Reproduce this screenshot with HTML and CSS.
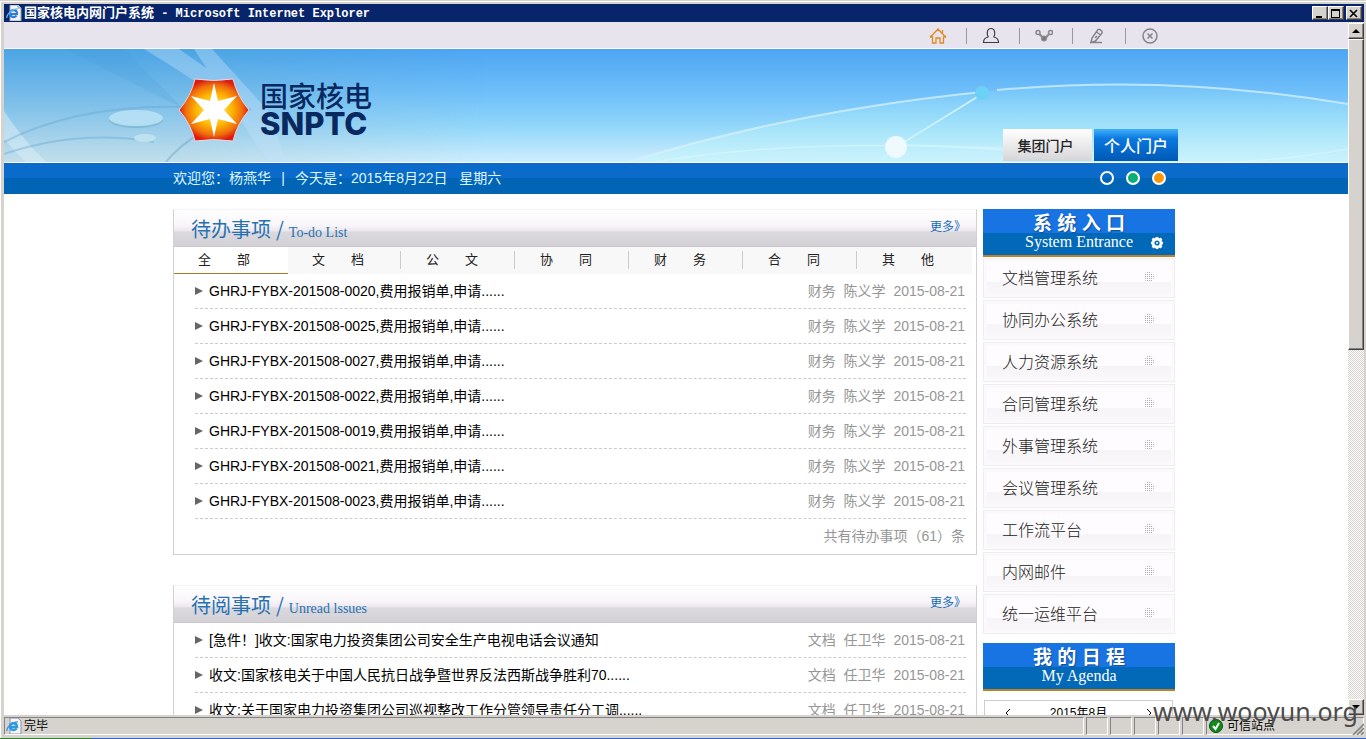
FILE: index.html
```html
<!DOCTYPE html>
<html lang="zh-CN">
<head>
<meta charset="utf-8">
<title>国家核电内网门户系统</title>
<link rel="stylesheet" href="styles.css">
</head>
<body>
<div class="window">
  <div class="titlebar">
    <svg class="page-icon" viewBox="0 0 16 16"><path d="M4 0h8l3 3v13H4z" fill="#f4f4f0" stroke="#9aa6b8"/><path d="M12 0v3h3" fill="#cfd6e2" stroke="#9aa6b8"/><path d="M3 9h8c0-5-7-5-7-.500 0 4 5 4.500 6.500 2" fill="none" stroke="#2c7fd4" stroke-width="2.200"/><path d="M1 13C0 10 7 3 12 4" fill="none" stroke="#6bb2ee" stroke-width="1.200"/></svg>
    <span class="window-title">国家核电内网门户系统<span class="window-app"> - Microsoft Internet Explorer</span></span>
    <div class="window-buttons">
      <button class="bevel win-btn" aria-label="最小化"><svg viewBox="0 0 13 11"><path d="M3 8h6v2H3z"/></svg></button>
      <button class="bevel win-btn" aria-label="最大化"><svg viewBox="0 0 13 11"><path d="M2 1h9v9H2zM3 3v6h7V3z" fill-rule="evenodd"/></svg></button>
      <button class="bevel win-btn win-close" aria-label="关闭"><svg viewBox="0 0 13 11"><path d="M3 2l7 7M10 2l-7 7" stroke="#000" stroke-width="1.600"/></svg></button>
    </div>
  </div>

  <div class="viewport">
    <div class="page">
      <div class="toolbar">
        <nav class="wrap tools">
          <button class="tool" aria-label="首页"><svg viewBox="0 0 18 18" fill="none" stroke="#e08a22" stroke-width="1.300"><path d="M2 9.500 9 2l7 7.500M1.500 8.500v1.500h2v6h3.500v-5h4v5h3.500v-6h2V8.500M13.500 3v3"/></svg></button>
          <button class="tool" aria-label="用户"><svg viewBox="0 0 18 18" fill="none" stroke="#3c3c40" stroke-width="1.200"><path d="M6.500 10C4.500 8 4.500 1.500 9 1.500S13.500 8 11.500 10M6.500 10C3 10.500 1.500 12 1.500 15.500h15c0-3.500-1.500-5-5-5.500"/></svg></button>
          <button class="tool" aria-label="分享"><svg viewBox="0 0 18 18" fill="none" stroke="#8a8a8e" stroke-width="1.500"><circle cx="3" cy="5.500" r="2"/><circle cx="15.500" cy="5.500" r="2"/><path d="m4.500 7 3 3.500M14 7l-3 3.500" stroke-width="2"/><circle cx="9" cy="11.500" r="2.300" fill="#77777b"/></svg></button>
          <button class="tool" aria-label="编辑"><svg viewBox="0 0 18 18" fill="none" stroke="#858589" stroke-width="1.500"><path d="M3 15.500 4 11l6-8.500h2l2 2v1.500L7.500 14zM8.500 5l4 3M9 9l-2 2M2 15.500h12"/></svg></button>
          <button class="tool" aria-label="退出"><svg viewBox="0 0 18 18" fill="none" stroke="#858589" stroke-width="1.500"><circle cx="9" cy="9" r="7"/><path d="m6.500 6.500 5 5M11.500 6.500l-5 5"/></svg></button>
        </nav>
      </div>

      <header class="banner">
        <svg class="banner-art" viewBox="0 0 1344 113" preserveAspectRatio="xMidYMid slice" aria-hidden="true">
          <defs>
            <linearGradient id="sky" x1="0" y1="0" x2="0" y2="1"><stop offset="0" stop-color="#4da5f3"/><stop offset=".4" stop-color="#70c0fa"/><stop offset=".7" stop-color="#94d8fa"/><stop offset="1" stop-color="#cfeefe"/></linearGradient>
            <linearGradient id="left" x1="0" y1="0" x2="0" y2="1"><stop offset="0" stop-color="#4ba4e4"/><stop offset=".5" stop-color="#80c1ea"/><stop offset="1" stop-color="#c2dfeb"/></linearGradient>
            <linearGradient id="fade" x1="0" y1="0" x2="1" y2="0"><stop offset=".4" stop-color="#fff"/><stop offset="1" stop-color="#000"/></linearGradient>
            <mask id="left-mask"><rect width="480" height="113" fill="url(#fade)"/></mask>
            <linearGradient id="glow" x1="0" y1="0" x2="0" y2="1"><stop offset="0" stop-color="#a6ecf8" stop-opacity=".15"/><stop offset="1" stop-color="#c8f5fb" stop-opacity=".65"/></linearGradient>
          </defs>
          <rect width="1344" height="113" fill="url(#sky)"/>
          <rect width="480" height="113" fill="url(#left)" mask="url(#left-mask)"/>
          <path d="M140 0h35l85 60h-30Q190 30 140 0zM190 0h18l58 64 16 49h-18z" fill="#c4e2fb" opacity=".4"/>
          <path d="M60 0h60l60 60z" fill="#3e97d4" opacity=".16"/>
          <path d="M0 62q20 30 42 51H22Q8 100 0 90z" fill="#dceff5" opacity=".5"/>
          <path d="M0 93Q75 55 180 58M0 105q75-25 150-12" fill="none" stroke="#65a4cc" stroke-width="2" opacity=".4"/>
          <path d="M162 113q25-31 85-53" fill="none" stroke="#70a8c7" stroke-width="2" opacity=".5"/>
          <ellipse cx="132" cy="71" rx="27" ry="8" fill="#82bcd9"/><ellipse cx="132" cy="69" rx="27" ry="8" fill="#b4def4"/>
          <ellipse cx="141" cy="89" rx="11" ry="4" fill="#bfe2f1"/>
          <path d="M624 113Q790 62 978 43T1344 55v58z" fill="url(#glow)"/>
          <path d="M624 113Q790 62 978 43M993 41q175-16 351 14" fill="none" stroke="#d6f1fe" stroke-width="2" opacity=".75"/>
          <path d="M650 113q150-25 350-12M900 96q170 4 250 14t194-10" fill="none" stroke="#e2fafe" stroke-width="1.500" opacity=".5"/>
          <path d="M978 45 892 98l-14 12" fill="none" stroke="#d2f3fe" stroke-width="1.500"/>
          <circle cx="978" cy="44" r="7" fill="#6cd1f6"/><circle cx="892" cy="98" r="11" fill="#eefaff"/>
        </svg>
        <div class="wrap banner-row">
          <div class="logo">
            <svg class="logo-mark" viewBox="0 0 72 64" aria-hidden="true">
              <defs><radialGradient id="fire"><stop offset="0" stop-color="#fff8a0"/><stop offset=".5" stop-color="#ffb800"/><stop offset=".8" stop-color="#f0700e"/><stop offset="1" stop-color="#dc1c10"/></radialGradient></defs>
              <path d="M17 1q19 3 38 0 4 17 16 31-12 14-16 31-19-3-38 0Q13 46 1 32 13 18 17 1z" fill="url(#fire)" stroke="#e9d5df"/>
              <path d="m36 5 4 18 19-5-13 14 13 14-19-5-4 18-4-18-19 5 13-14-13-14 19 5z" fill="#fff"/><circle cx="36" cy="32" r="10" fill="#fff"/>
            </svg>
            <div class="logo-text"><span class="logo-cn">国家核电</span><span class="logo-en">SNPTC</span></div>
          </div>
          <nav class="portals"><a class="portal" href="#">集团门户</a><a class="portal portal-on" href="#">个人门户</a></nav>
        </div>
      </header>

      <div class="greeting">
        <div class="wrap greeting-row">
          <p class="hello"><span>欢迎您：杨燕华</span><span class="bar">|</span><span>今天是：2015年8月22日&nbsp;&nbsp; 星期六</span></p>
          <div class="skins"><button class="skin" aria-label="蓝色"></button><button class="skin skin-green" aria-label="绿色"></button><button class="skin skin-orange" aria-label="橙色"></button></div>
        </div>
      </div>

      <div class="wrap columns">
        <main class="main">
          <section class="panel">
            <div class="panel-head"><h2 class="panel-title">待办事项 <span class="slash">/</span><span class="panel-en">To-do List</span></h2><a class="more" href="#">更多》</a></div>
            <nav class="tabs">
              <button class="tab tab-on">全&emsp;&emsp;部</button><button class="tab">文&emsp;&emsp;档</button><button class="tab">公&emsp;&emsp;文</button><button class="tab">协&emsp;&emsp;同</button><button class="tab">财&emsp;&emsp;务</button><button class="tab">合&emsp;&emsp;同</button><button class="tab">其&emsp;&emsp;他</button>
            </nav>
            <ul class="rows">
              <li class="row"><a class="row-link" href="#">GHRJ-FYBX-201508-0020,费用报销单,申请......</a><span class="meta">财务&nbsp; 陈义学&nbsp; 2015-08-21</span></li>
              <li class="row"><a class="row-link" href="#">GHRJ-FYBX-201508-0025,费用报销单,申请......</a><span class="meta">财务&nbsp; 陈义学&nbsp; 2015-08-21</span></li>
              <li class="row"><a class="row-link" href="#">GHRJ-FYBX-201508-0027,费用报销单,申请......</a><span class="meta">财务&nbsp; 陈义学&nbsp; 2015-08-21</span></li>
              <li class="row"><a class="row-link" href="#">GHRJ-FYBX-201508-0022,费用报销单,申请......</a><span class="meta">财务&nbsp; 陈义学&nbsp; 2015-08-21</span></li>
              <li class="row"><a class="row-link" href="#">GHRJ-FYBX-201508-0019,费用报销单,申请......</a><span class="meta">财务&nbsp; 陈义学&nbsp; 2015-08-21</span></li>
              <li class="row"><a class="row-link" href="#">GHRJ-FYBX-201508-0021,费用报销单,申请......</a><span class="meta">财务&nbsp; 陈义学&nbsp; 2015-08-21</span></li>
              <li class="row"><a class="row-link" href="#">GHRJ-FYBX-201508-0023,费用报销单,申请......</a><span class="meta">财务&nbsp; 陈义学&nbsp; 2015-08-21</span></li>
            </ul>
            <p class="total">共有待办事项（61）条</p>
          </section>

          <section class="panel">
            <div class="panel-head"><h2 class="panel-title">待阅事项 <span class="slash">/</span><span class="panel-en">Unread lssues</span></h2><a class="more" href="#">更多》</a></div>
            <ul class="rows">
              <li class="row"><a class="row-link" href="#">[急件！]收文:国家电力投资集团公司安全生产电视电话会议通知</a><span class="meta">文档&nbsp; 任卫华&nbsp; 2015-08-21</span></li>
              <li class="row"><a class="row-link" href="#">收文:国家核电关于中国人民抗日战争暨世界反法西斯战争胜利70......</a><span class="meta">文档&nbsp; 任卫华&nbsp; 2015-08-21</span></li>
              <li class="row"><a class="row-link" href="#">收文:关于国家电力投资集团公司巡视整改工作分管领导责任分工调......</a><span class="meta">文档&nbsp; 任卫华&nbsp; 2015-08-21</span></li>
            </ul>
          </section>
        </main>

        <aside class="side">
          <div class="side-head"><h2 class="side-title">系 统 入 口</h2><span class="side-en">System Entrance</span>
            <button class="gear" aria-label="设置"><svg viewBox="0 0 14 14"><circle cx="7" cy="7" r="4" fill="none" stroke="#fff" stroke-width="2.800"/><path d="M7 1v2M7 11v2M1 7h2M11 7h2M2.500 2.500 4 4M10 10l1.500 1.500M11.500 2.500 10 4M4 10l-1.500 1.500" stroke="#fff" stroke-width="2.600"/><circle cx="7" cy="7" r="1" fill="#fff"/></svg></button>
          </div>
          <ul class="entries">
            <li><a class="entry" href="#">文档管理系统</a></li>
            <li><a class="entry" href="#">协同办公系统</a></li>
            <li><a class="entry" href="#">人力资源系统</a></li>
            <li><a class="entry" href="#">合同管理系统</a></li>
            <li><a class="entry" href="#">外事管理系统</a></li>
            <li><a class="entry" href="#">会议管理系统</a></li>
            <li><a class="entry" href="#">工作流平台</a></li>
            <li><a class="entry" href="#">内网邮件</a></li>
            <li><a class="entry" href="#">统一运维平台</a></li>
          </ul>
          <div class="side-head"><h2 class="side-title">我 的 日 程</h2><span class="side-en">My Agenda</span></div>
          <div class="calendar">
            <button class="month-btn" aria-label="上个月"><svg viewBox="0 0 6 10"><path d="M5 1 1 5l4 4" fill="none" stroke="#000"/></svg></button><span>2015年8月</span><button class="month-btn" aria-label="下个月"><svg viewBox="0 0 6 10"><path d="m1 1 4 4-4 4" fill="none" stroke="#000"/></svg></button>
          </div>
        </aside>
      </div>
    </div>

    <div class="scrollbar">
      <button class="bevel scroll-btn" aria-label="向上"><svg viewBox="0 0 8 4"><path d="M0 4l4-4 4 4z"/></svg></button>
      <div class="bevel thumb"></div>
      <button class="bevel scroll-btn scroll-down" aria-label="向下"><svg viewBox="0 0 8 4"><path d="M0 0l4 4 4-4z"/></svg></button>
    </div>
  </div>

  <footer class="statusbar">
    <div class="cell cell-main"><svg class="page-icon" viewBox="0 0 16 16"><path d="M4 0h8l3 3v13H4z" fill="#f4f4f0" stroke="#8693bb"/><path d="M3 9h8c0-5-7-5-7-.500 0 4 5 4.500 6.500 2" fill="none" stroke="#2c9be4" stroke-width="2.400"/><path d="M1 13C0 10 7 3 12 4" fill="none" stroke="#3f91d9" stroke-width="1.200"/></svg>完毕</div>
    <div class="cell"></div><div class="cell"></div><div class="cell"></div><div class="cell"></div><div class="cell"></div>
    <div class="cell cell-zone"><svg class="trust-icon" viewBox="0 0 14 14"><circle cx="7" cy="7" r="6.500" fill="#128a1c" stroke="#0b4d12"/><path d="m4 7 2.500 3L10 4" fill="none" stroke="#fff" stroke-width="2"/></svg>可信站点</div>
    <svg class="grip" viewBox="0 0 12 12"><path d="M1 12 12 1M5 12l7-7M9 12l3-3" stroke="#808080" stroke-width="1.600"/></svg>
  </footer>
  <div class="taskbar-edge"></div>
  <div class="watermark">www.wooyun.org</div>
</div>
</body>
</html>
```

FILE: styles.css
```css
* { box-sizing: border-box; }
body { margin: 0; font: 14px/20px "Liberation Sans", "Noto Sans CJK SC", sans-serif; color: #000; }
h2, p, ul { margin: 0; padding: 0; font-weight: 400; }
ul { list-style: none; }
a { color: inherit; text-decoration: none; }
button { margin: 0; padding: 0; border: 0; background: none; font: inherit; color: inherit; }
svg { display: block; flex: none; }

/* Browser window */
.window { position: relative; display: flex; flex-direction: column; height: 100vh; overflow: hidden; background: #d6d3ce; box-shadow: inset 0 1px #d6d3ce, inset 1px 2px #fff; }
.titlebar { display: flex; align-items: center; height: 18px; margin: 4px 2px 0 4px; padding: 0 2px; background: #08246b; color: #fff; }
.page-icon { width: 16px; height: 16px; margin-right: 2px; }
.window-title { flex: 1; font: bold 13px/18px "Noto Sans CJK SC", sans-serif; white-space: pre; }
.window-app { font: bold 12px/18px "Liberation Mono", monospace; }
.window-buttons { display: flex; }
.bevel { background: #d6d3ce; border: 1px solid; border-color: #fff #404040 #404040 #fff; box-shadow: inset -1px -1px #848284; }
.win-btn { width: 16px; height: 14px; }
.win-btn svg { width: 13px; height: 11px; }
.win-close { margin-left: 2px; }
.viewport { display: flex; flex: 1; min-height: 0; margin: 0 2px 0 4px; }
.page { flex: 1; overflow: hidden; background: #fff; }
.wrap { width: 100%; max-width: 1006px; margin: 0 auto; }

.scrollbar { display: flex; flex-direction: column; width: 16px; padding-top: 1px; background: repeating-conic-gradient(#fff 0 25%, #d6d3ce 0 50%) 0 0 / 2px 2px; }
.scroll-btn { display: grid; place-items: center; height: 16px; }
.scroll-btn svg { width: 8px; height: 4px; }
.thumb { height: 45%; }
.scroll-down { margin-top: auto; }

.statusbar { position: relative; display: flex; gap: 2px; height: 23px; margin: 0 2px 0 4px; padding: 2px 0 3px; font-size: 12px; line-height: 16px; }
.cell { display: flex; align-items: center; width: 22px; border: 1px solid; border-color: #848284 #fff #fff #848284; }
.cell-main { flex: 1; padding-left: 1px; }
.cell-zone { width: 158px; padding-left: 2px; }
.trust-icon { width: 14px; height: 14px; margin-right: 4px; }
.grip { position: absolute; right: 0; bottom: 3px; width: 12px; height: 12px; }
.taskbar-edge { height: 1px; background: linear-gradient(90deg, #2c8a2c 92px, #2a66dc 92px); }
.watermark { position: absolute; right: 8px; bottom: 10px; font: 25px/36px "Noto Sans", sans-serif; color: #4c4c4c; }

/* Header */
.toolbar { padding-top: 1px; background: #e7e4ee; border-bottom: 1px solid #fff; }
.tools { display: flex; justify-content: flex-end; padding-right: 1px; }
.tool { display: grid; place-items: center; position: relative; width: 53px; height: 25px; padding-right: 3px; }
.tool + .tool::before { content: ""; position: absolute; left: 0; top: 5px; height: 16px; border-left: 1px solid #99979f; }
.tool svg { width: 18px; height: 18px; }
.banner { position: relative; border-bottom: 1px solid #fff; }
.banner-art { position: absolute; inset: 0; width: 100%; height: 100%; }
.banner-row { position: relative; display: flex; justify-content: space-between; align-items: flex-end; height: 113px; padding: 0 1px 1px 5px; }
.logo { display: flex; align-items: center; gap: 10px; align-self: center; padding-top: 9px; }
.logo-mark { width: 72px; height: 64px; }
.logo-text { display: flex; flex-direction: column; color: #08295f; }
.logo-cn { font: 500 28px/28px "Noto Sans CJK SC", sans-serif; }
.logo-en { font: 800 31px/30px "Inter", sans-serif; }
.portals { display: flex; gap: 2px; }
.portal { width: 89px; padding-right: 4px; background: linear-gradient(#fff, #f0eff0 40%, #d5d4d7); color: #262626; font: 500 14px/32px "Noto Sans CJK SC", sans-serif; text-align: center; }
.portal-on { width: 84px; padding: 0; background: linear-gradient(#42b1fb, #0a78e0 30%, #0059b5); color: #fff; font-size: 16px; }
.greeting { background: linear-gradient(#0b6bcb 50%, #0264b4 50%); color: #dff8ff; }
.greeting-row { display: flex; justify-content: space-between; align-items: center; height: 31px; padding-bottom: 2px; }
.hello { display: flex; }
.bar { width: 24px; text-align: center; }
.skins { display: flex; gap: 12px; padding-right: 13px; }
.skin { width: 14px; height: 14px; border: 2px solid #fff; border-radius: 50%; }
.skin-green { background: #0cae77; }
.skin-orange { background: #f99808; }

/* Content */
.columns { display: flex; align-items: flex-start; gap: 6px; padding: 15px 4px 0 0; }
.main { flex: 1; display: flex; flex-direction: column; gap: 30px; }
.panel { border: 1px solid #d2d0d4; border-top-color: #f5f1f6; }
.panel-head { display: flex; justify-content: space-between; height: 37px; padding: 0 10px 0 17px; background: linear-gradient(#fff, #faf6fb 40%, #ece8ee 58%, #dcd9de 61%, #d5d2d7); border-bottom: 1px solid #cac6cc; }
.panel-title { display: flex; align-items: baseline; font: 20px/37px "Noto Sans CJK SC", sans-serif; color: #2672b1; }
.slash { margin: 0 5px; }
.panel-en { font-family: "Liberation Serif", serif; font-size: 14px; }
.more { font-size: 12px; line-height: 34px; color: #126db8; }
.tabs { display: flex; padding-right: 4px; }
.tab { position: relative; flex: 1; height: 27px; padding: 0 0 0 24px; border-bottom: 1px solid transparent; background: #f8f8f9; font-size: 13px; line-height: 24px; text-align: left; white-space: nowrap; color: #222; }
.tab-on { background: #fff; border-bottom-color: #a87a2c; }
.tab + .tab + .tab::before { content: ""; position: absolute; left: -2px; top: 4px; height: 18px; border-left: 1px solid #ccc; }
.rows { padding: 0 10px 0 21px; }
.row { display: flex; justify-content: space-between; height: 35px; line-height: 34px; border-bottom: 1px dashed #ccc; }
.row-link { display: flex; align-items: center; gap: 6px; }
.row-link::before { content: ""; border: 4px solid transparent; border-left: 8px solid #666; border-right: 0; }
.meta, .total { padding-right: 1px; color: #969696; }
.total { padding-right: 11px; line-height: 35px; text-align: right; }

.side { width: 192px; }
.side-head { position: relative; display: flex; flex-direction: column; align-items: center; height: 48px; padding-top: 4px; border-bottom: 2px solid #bd8126; background: linear-gradient(#1873e3 24px, #0268b8 24px); color: #fff; }
.side-title { font: bold 19px/21px "Liberation Sans", "Noto Sans CJK SC", sans-serif; text-shadow: 1px 1px 1px #124f9d; }
.side-en { font: 16px/16px "Liberation Serif", serif; }
.gear { position: absolute; right: 11px; top: 27px; }
.gear svg { width: 14px; height: 14px; }
.entries { display: grid; gap: 2px; padding: 1px 0 9px; }
.entry { display: flex; justify-content: space-between; align-items: center; height: 40px; padding: 0 20px 3px 18px; border: 1px solid #f0edf1; background: linear-gradient(#fefcfe 60%, #f6f4f6 60%, #faf8fa); box-shadow: inset 0 0 0 3px #fbf9fb; font-size: 16px; font-family: "Noto Sans CJK SC", sans-serif; font-weight: 300; color: #222; }
.entry::after { content: ""; width: 10px; height: 10px; border-radius: 50%; background: conic-gradient(#aaa 25%, transparent 0) 0 0 / 2px 2px; }
.calendar { display: flex; justify-content: space-between; margin: 9px 2px 0 1px; padding: 2px 20px; border: 1px solid #cfccd1; font-size: 12px; height: 160px; }
.month-btn { height: 20px; }
.month-btn svg { width: 6px; height: 10px; }
```
